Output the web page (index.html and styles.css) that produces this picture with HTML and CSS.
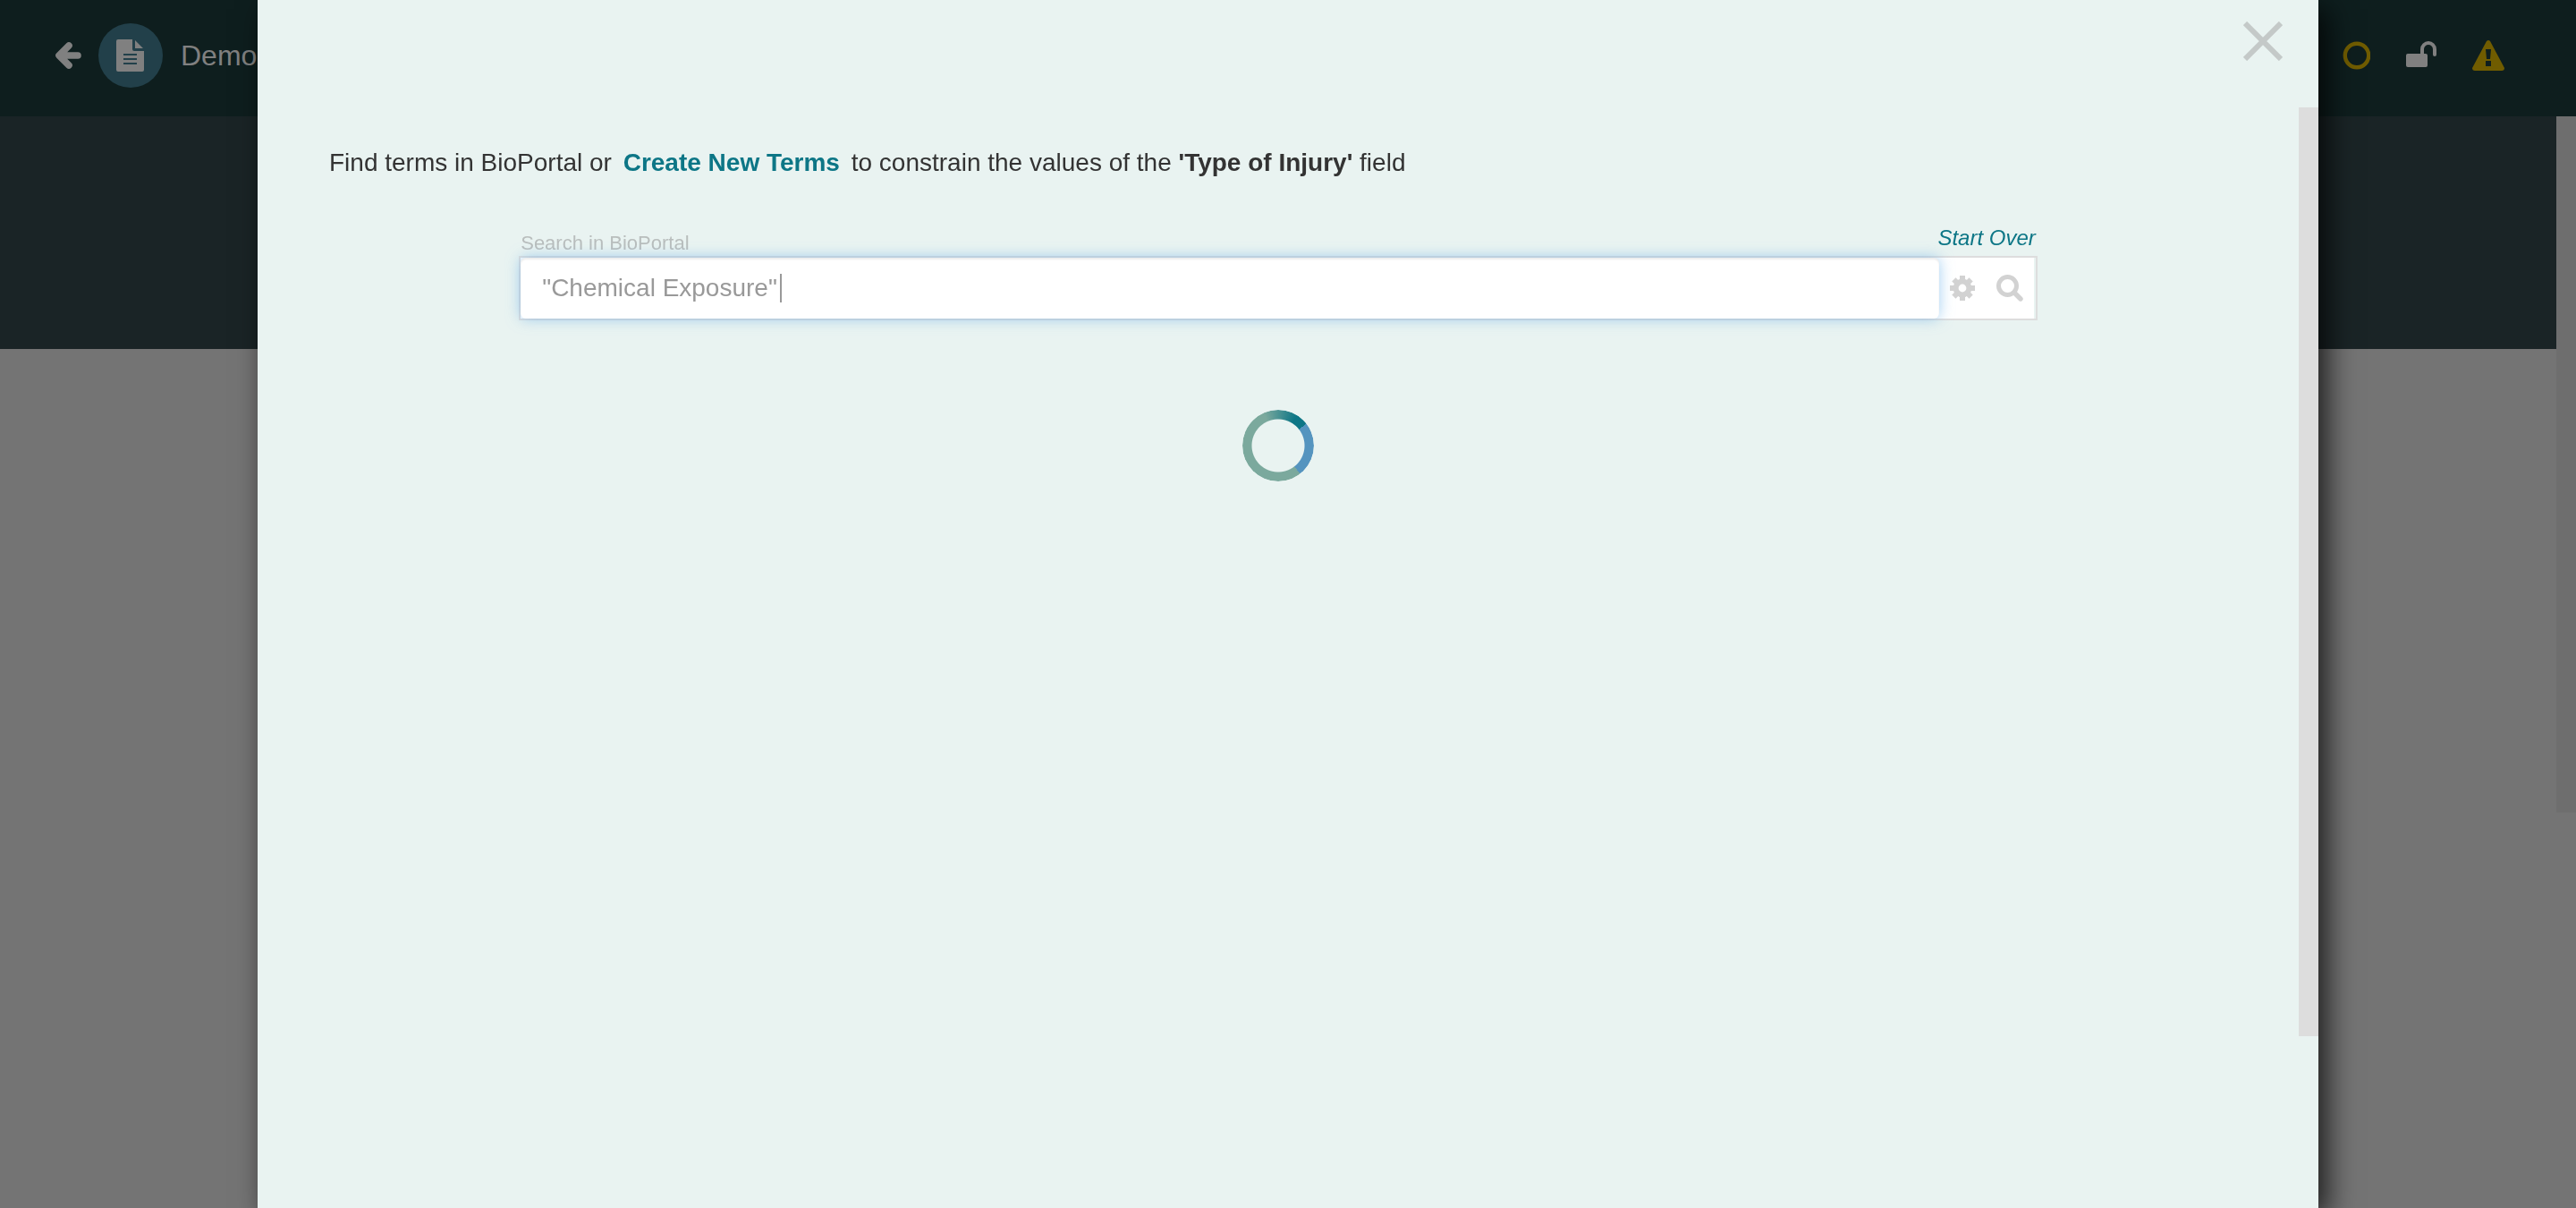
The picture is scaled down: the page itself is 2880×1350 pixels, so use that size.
FILE: index.html
```html
<!DOCTYPE html>
<html lang="en">
<head>
<meta charset="utf-8">
<title>Demo</title>
<link rel="stylesheet" href="styles.css">
</head>
<body>
<header class="topbar">
  <button class="icon-button" type="button" aria-label="Back">
    <svg width="32" height="34" viewBox="0 0 32 34"><path d="M17 6 6 17l11 11M7 17h20" fill="none" stroke="currentColor" stroke-width="7.6" stroke-linecap="round" stroke-linejoin="round"/></svg>
  </button>
  <span class="badge">
    <svg width="32" height="36" viewBox="0 0 32 36"><path fill="currentColor" fill-rule="evenodd" d="M2 0H18V11q0 2 2 2H31V34q0 2-2 2H2q-2 0-2-2V2Q0 0 2 0ZM21 1 30 10H21ZM8 16V18H23V16ZM8 21V23H23V21ZM8 26V28H23V26Z"/></svg>
  </span>
  <h1 class="topbar-title">Demo</h1>
  <div class="status">
    <svg width="32" height="32" viewBox="0 0 32 32" class="warn"><circle cx="17" cy="16" r="13.2" fill="none" stroke="currentColor" stroke-width="4.4"/></svg>
    <svg width="34" height="32" viewBox="0 0 34 32"><rect y="14" width="24" height="15" rx="2" fill="currentColor"/><path d="M18 15V9a7 7 0 0 1 14 0v6" fill="none" stroke="currentColor" stroke-width="4" stroke-linecap="round"/></svg>
    <svg width="36" height="34" viewBox="0 0 36 34" class="warn"><path fill="currentColor" fill-rule="evenodd" d="M16 1q2-2 4 0L36 31q0 3-3 3H3q-3 0-3-3ZM15 10 16 21H20L21 10ZM15 23V29H21V23Z"/></svg>
  </div>
</header>
<main class="page">
  <div class="band"></div>
  <div class="page-scroll"></div>
</main>

<div class="modal" role="dialog" aria-label="Find terms">
  <div class="modal-head">
    <button class="close" type="button" aria-label="Close">
      <svg width="44" height="44" viewBox="0 0 44 44"><path d="M2 2 42 42M42 2 2 42" stroke="currentColor" stroke-width="6"/></svg>
    </button>
  </div>
  <div class="modal-main">
    <div class="modal-body">
      <p class="intro">Find terms in BioPortal or <a href="#create">Create New Terms</a> to constrain the values of the <strong>'Type of Injury'</strong> field</p>
      <form class="search">
        <div class="search-top">
          <label for="q">Search in BioPortal</label>
          <a href="#restart">Start Over</a>
        </div>
        <div class="search-box">
          <input id="q" type="text" value="&quot;Chemical Exposure&quot;">
          <span class="caret"></span>
          <button type="button" aria-label="Options">
            <svg width="28" height="28" viewBox="-14 -14 28 28"><circle r="7.4" fill="none" stroke="currentColor" stroke-width="6"/><path d="M0-14V-9M0 14V9M-14 0H-9M14 0H9M-9.6-9.6-6-6M9.6 9.6 6 6M-9.6 9.6-6 6M9.6-9.6 6-6" stroke="currentColor" stroke-width="6"/></svg>
          </button>
          <button type="submit" aria-label="Search">
            <svg width="30" height="30" viewBox="0 0 30 30"><circle cx="12.5" cy="12.5" r="10" fill="none" stroke="currentColor" stroke-width="5"/><path d="M20 20 27 27" stroke="currentColor" stroke-width="5.4" stroke-linecap="round"/></svg>
          </button>
        </div>
      </form>
      <div class="spinner" role="status" aria-label="Loading"></div>
    </div>
    <div class="modal-scroll"></div>
  </div>
</div>
</body>
</html>
```
FILE: styles.css
```css
* { box-sizing: border-box; }
body {
  margin: 0;
  min-height: 100vh;
  display: flex;
  flex-direction: column;
  background: #747474;
  color: #333;
  font: 28px/40px "Liberation Sans", Arial, sans-serif;
}
button { padding: 0; border: 0; background: none; color: inherit; }
svg { display: block; }
a { color: #0d7686; text-decoration: none; }

.topbar {
  display: flex;
  align-items: center;
  height: 130px;
  padding: 0 80px 6px 60px;
  background: #0e1e1e;
  color: #808080;
}
.badge {
  display: flex;
  align-items: center;
  justify-content: center;
  width: 72px;
  height: 72px;
  margin: 0 20px 0 18px;
  border-radius: 50%;
  background: #22404a;
}
.topbar-title { margin: 0; font-size: 32px; font-weight: normal; }
.status { display: flex; align-items: center; gap: 40px; margin-left: auto; }
.warn { color: #705c00; }

.page { display: flex; flex: 1; align-items: flex-start; }
.band { flex: 1; height: 260px; background: #1a2426; }
.page-scroll { width: 22px; height: 778px; background: #6e6e6e; }

.modal {
  position: fixed;
  inset: 0 10%;
  display: flex;
  flex-direction: column;
  background: #e9f3f1;
  box-shadow: 10px 10px 30px rgba(0, 0, 0, .75);
}
.modal-head {
  display: flex;
  justify-content: flex-end;
  height: 120px;
  padding: 24px 40px;
}
.close { height: 44px; color: #c4c9c8; }
.modal-main { display: flex; flex: 1; align-items: flex-start; }
.modal-scroll { width: 22px; height: 1038px; background: #ddd; }
.modal-body {
  flex: 1;
  display: flex;
  flex-direction: column;
  align-items: center;
  padding: 42px 80px;
}
.intro { align-self: stretch; margin: 0 0 44px; }
.intro a { margin: 0 5px; font-weight: bold; }

.search { width: 80%; }
.search-top {
  display: flex;
  align-items: flex-start;
  justify-content: space-between;
  height: 40px;
  padding: 0 2px;
}
.search-top label { padding-top: 6px; color: #b9bebd; font-size: 22px; line-height: 40px; }
.search-top a { font-size: 24px; font-style: italic; }
.search-box {
  position: relative;
  display: flex;
  align-items: center;
  height: 72px;
  border: 2px solid #ddd;
  background: #fff;
  box-shadow: inset -2px 0 #e9f3f1;
  color: #d2d2d2;
}
.search-box input {
  flex: 1;
  height: 68px;
  margin-right: 12px;
  padding: 0 24px;
  border: 0;
  border-radius: 6px;
  outline: 0;
  background: #fff;
  box-shadow: inset 0 2px 2px rgba(0, 0, 0, .075), 0 0 16px rgba(102, 175, 233, .6);
  color: #999;
  font: inherit;
}
.search-box button { margin-right: 24px; }
.search-box button:last-child { margin-right: 14px; }
.caret {
  position: absolute;
  left: 290px;
  top: 18px;
  width: 2px;
  height: 32px;
  background: #999;
}

.spinner {
  width: 80px;
  height: 80px;
  margin-top: 100px;
  border-radius: 50%;
  background: conic-gradient(from -24deg, #7ba99d, #0d7686 56deg 76deg, #5594bf 76deg 166deg, #7ba99d 166deg);
  mask: radial-gradient(circle, transparent 29px, #000 30px);
}
```
